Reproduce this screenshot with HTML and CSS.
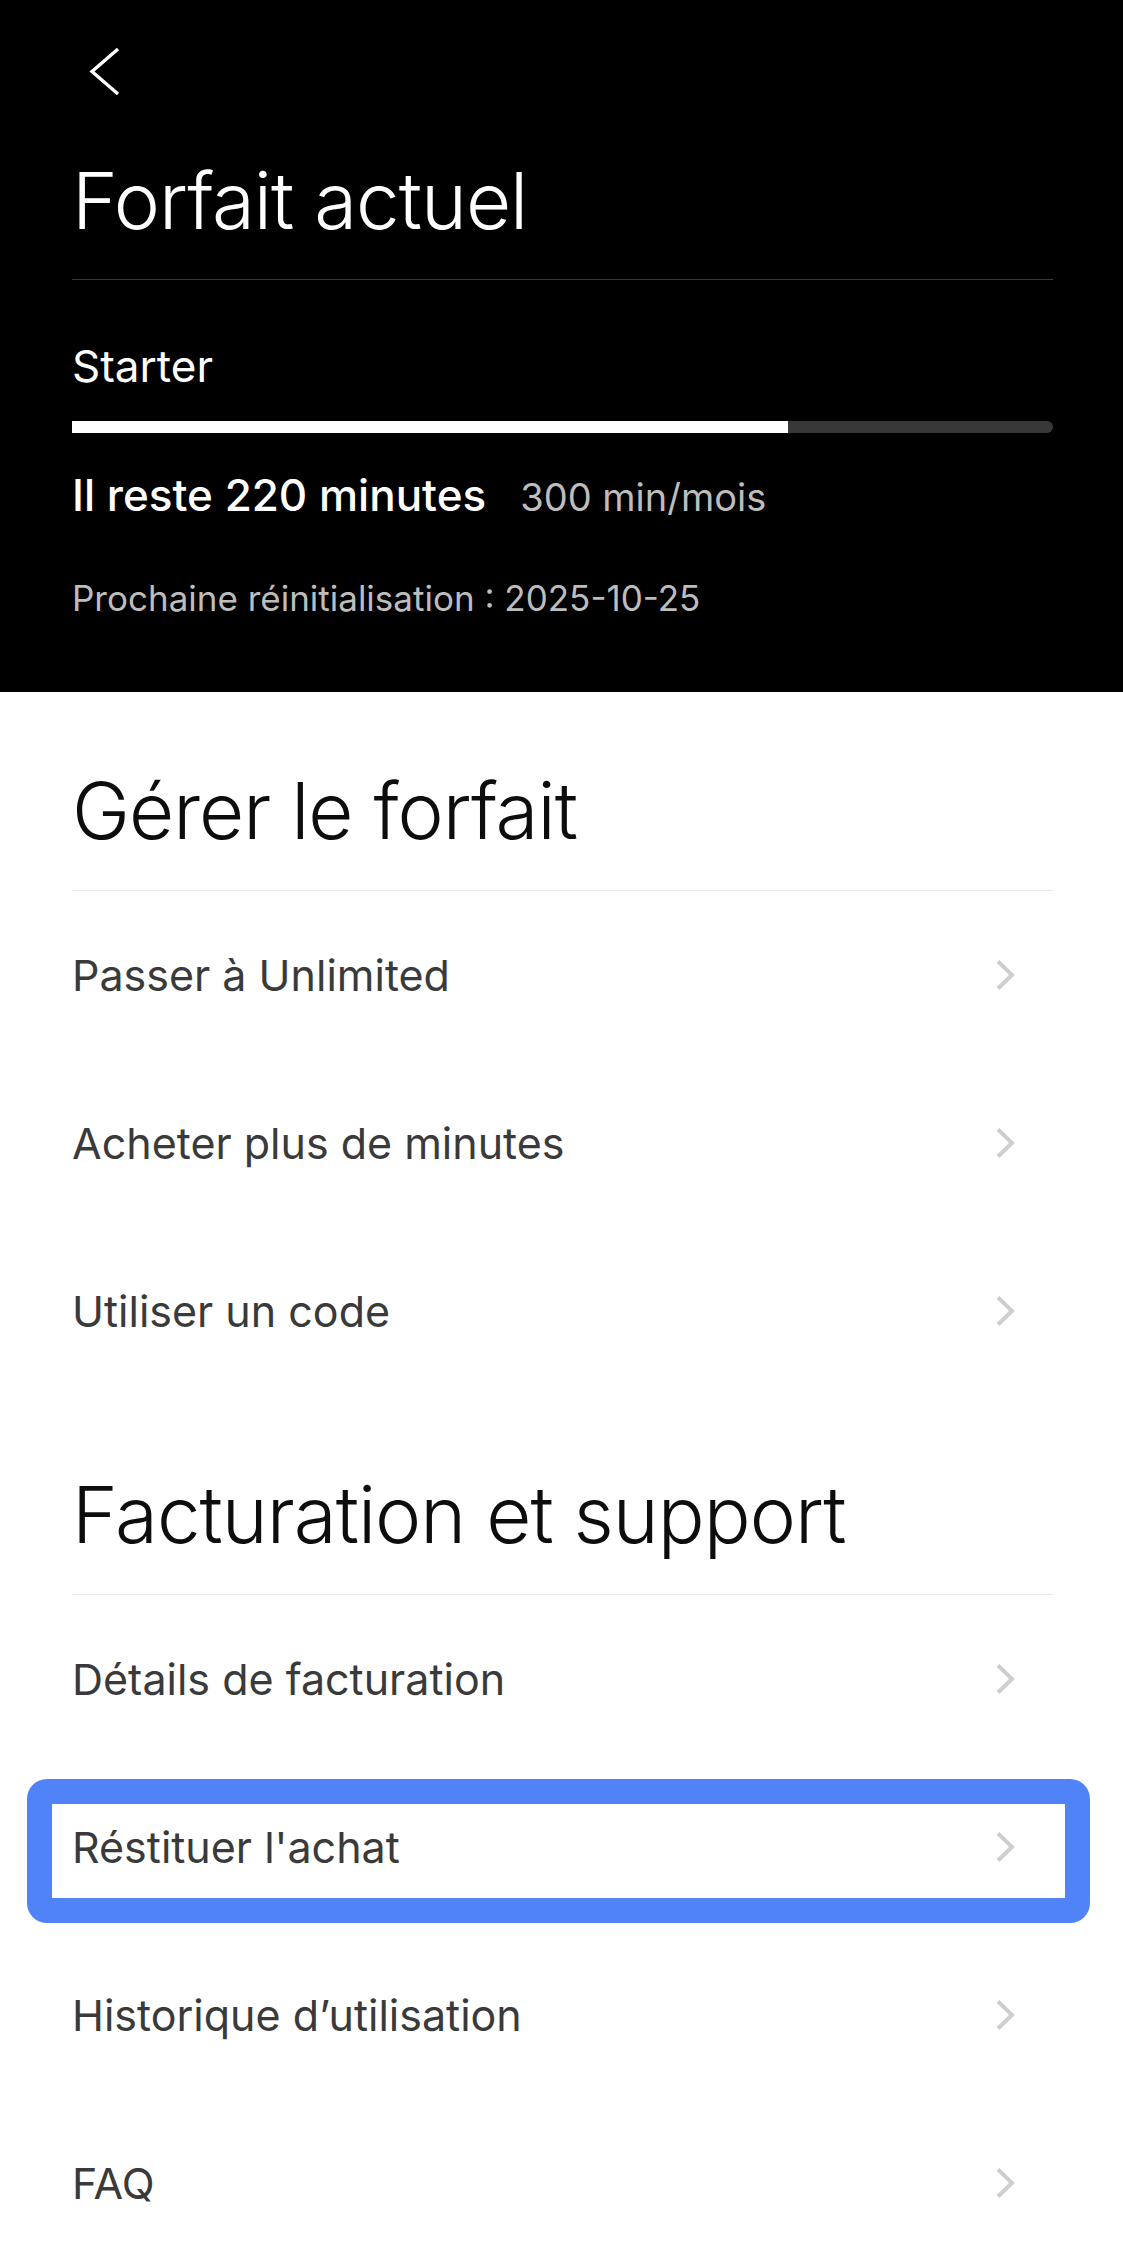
FILE: index.html
```html
<!DOCTYPE html>
<html lang="fr">
<head>
    <meta charset="UTF-8">
    <meta name="viewport" content="width=device-width, initial-scale=1.0">
    <title>Forfait actuel</title>
    <link rel="stylesheet" href="styles.css">
</head>
<body>
    <div class="entete">
        <div class="retour">
            <svg width="34" height="50" viewBox="0 0 34 50">
                <path d="M30 2 L4 24.5 L30 47" fill="none" stroke="#fff" stroke-width="3.4" stroke-linejoin="miter"/>
            </svg>
        </div>

        <h1 class="titre">Forfait actuel</h1>

        <div class="forfait">Starter</div>

        <!-- 220 / 300 minutes restantes -->
        <div class="barre">
            <div class="remplissage" style="width: 73%;"></div>
        </div>

        <div class="reste">
            <span class="reste-principal">Il reste 220 minutes</span>
            <span class="reste-total">300 min/mois</span>
        </div>

        <div class="reinit">Prochaine réinitialisation : 2025-10-25</div>
    </div>

    <div class="contenu">
        <h2 class="section">Gérer le forfait</h2>
        <ul class="liste">
            <li class="ligne">
                <span>Passer à Unlimited</span>
                <svg class="fleche" width="22" height="32" viewBox="0 0 22 32"><path d="M3 2.5 L17 16 L3 29.5"/></svg>
            </li>
            <li class="ligne">
                <span>Acheter plus de minutes</span>
                <svg class="fleche" width="22" height="32" viewBox="0 0 22 32"><path d="M3 2.5 L17 16 L3 29.5"/></svg>
            </li>
            <li class="ligne">
                <span>Utiliser un code</span>
                <svg class="fleche" width="22" height="32" viewBox="0 0 22 32"><path d="M3 2.5 L17 16 L3 29.5"/></svg>
            </li>
        </ul>

        <h2 class="section section-suite">Facturation et support</h2>
        <ul class="liste">
            <li class="ligne">
                <span>Détails de facturation</span>
                <svg class="fleche" width="22" height="32" viewBox="0 0 22 32"><path d="M3 2.5 L17 16 L3 29.5"/></svg>
            </li>
            <li class="ligne">
                <span>Réstituer l'achat</span>
                <svg class="fleche" width="22" height="32" viewBox="0 0 22 32"><path d="M3 2.5 L17 16 L3 29.5"/></svg>
                <div class="surligne"></div>
            </li>
            <li class="ligne">
                <span>Historique d’utilisation</span>
                <svg class="fleche" width="22" height="32" viewBox="0 0 22 32"><path d="M3 2.5 L17 16 L3 29.5"/></svg>
            </li>
            <li class="ligne">
                <span>FAQ</span>
                <svg class="fleche" width="22" height="32" viewBox="0 0 22 32"><path d="M3 2.5 L17 16 L3 29.5"/></svg>
            </li>
        </ul>
    </div>
</body>
</html>
```

FILE: styles.css
```css
* {
    margin: 0;
    padding: 0;
    box-sizing: border-box;
}

body {
    background-color: #fff;
    font-family: Inter, "Noto Sans", sans-serif;
}

/* Bloc noir du haut */
.entete {
    background-color: #000;
    color: #fff;
    padding: 47px 70px 72px 72px;
}

.retour {
    height: 50px;
    margin-left: 16px;
}

.retour svg {
    display: block;
}

.titre {
    font-size: 78px;
    font-weight: 300;
    letter-spacing: -1px;
    line-height: 96px;
    margin-top: 56px;
    padding-bottom: 30px;
    border-bottom: 1px solid #3a3a3a;
}

.forfait {
    font-size: 44px;
    line-height: 52px;
    margin-top: 60px;
}

.barre {
    height: 12px;
    margin-top: 29px;
    background-color: #383838;
    border-radius: 0 6px 6px 0;
}

.remplissage {
    height: 100%;
    background-color: #fff;
}

.reste {
    display: flex;
    align-items: baseline;
    margin-top: 36px;
    line-height: 52px;
}

.reste-principal {
    font-size: 44px;
    font-weight: 450;
}

.reste-total {
    font-size: 38px;
    color: #bdbdbd;
    margin-left: 34px;
}

.reinit {
    font-size: 35px;
    line-height: 44px;
    color: #bdbdbd;
    margin-top: 53px;
}

/* Partie blanche */
.contenu {
    padding: 71px 70px 0 72px;
}

.section {
    font-size: 78px;
    font-weight: 300;
    letter-spacing: -1px;
    line-height: 96px;
    color: #0d0d0d;
    padding-bottom: 31px;
    border-bottom: 1px solid #e9e9e9;
}

.section-suite {
    margin-top: 72px;
}

.liste {
    list-style: none;
}

.ligne {
    position: relative;
    height: 168px;
    display: flex;
    align-items: center;
    justify-content: space-between;
    font-size: 43px;
    color: #3a3a3a;
}

.fleche {
    margin-right: 36px;
}

.fleche path {
    fill: none;
    stroke: #cfcfcf;
    stroke-width: 4;
}

/* Cadre bleu autour de la ligne mise en avant */
.surligne {
    position: absolute;
    top: 16px;
    bottom: 8px;
    left: -45px;
    right: -37px;
    border: 25px solid #4f83f7;
    border-radius: 20px;
}
```
